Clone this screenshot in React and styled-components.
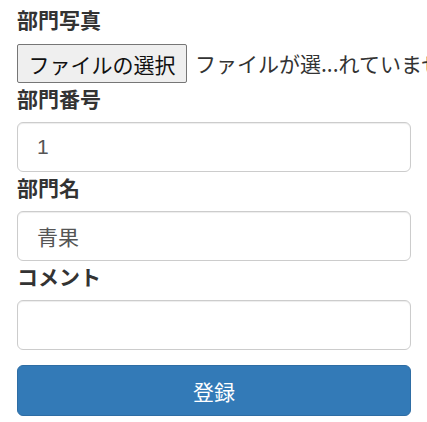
import React from 'react'
import styled, { createGlobalStyle } from 'styled-components'

const GlobalStyle = createGlobalStyle`
  html, body {
    margin: 0;
    padding: 0;
    background: #fff;
    overflow: hidden;
  }
  body {
    font-family: "Liberation Sans", "Noto Sans CJK JP", sans-serif;
    color: #333;
  }
`

const Form = styled.form`
  padding: 4px 16px 0 17px;
  display: flex;
  flex-direction: column;
`

const Label = styled.label`
  display: block;
  font-family: "Noto Sans CJK JP", sans-serif;
  font-weight: 700;
  font-size: 21px;
  line-height: 30px;
  height: 30px;
  margin-bottom: 9px;
  color: #333;
`

const FileRow = styled.div`
  display: flex;
  align-items: flex-start;
  height: 40px;
  white-space: nowrap;
  width: 410px;
  overflow: hidden;
`

const FileButton = styled.button`
  box-sizing: border-box;
  margin-top: 1px;
  height: 39px;
  width: 170px;
  padding: 0;
  background: #efefef;
  border: 1px solid #767676;
  border-radius: 2px;
  font-family: "Noto Sans CJK JP", sans-serif;
  font-size: 21px;
  color: #111;
  flex-shrink: 0;
`

const FileName = styled.span`
  margin-left: 8px;
  margin-top: 1px;
  line-height: 39px;
  font-family: "Noto Sans CJK JP", sans-serif;
  font-size: 21px;
  color: #333;
`

const Input = styled.input`
  box-sizing: border-box;
  display: block;
  width: 100%;
  height: 50px;
  margin: 0;
  padding: 0 19px;
  border: 1px solid #ccc;
  border-radius: 6px;
  box-shadow: inset 0 1px 1px rgba(0, 0, 0, 0.075);
  font-family: "Liberation Sans", "Noto Sans CJK JP", sans-serif;
  font-size: 21px;
  color: #555;
  background: #fff;
  outline: none;
`

const Submit = styled.button`
  box-sizing: border-box;
  margin-top: 15px;
  width: 100%;
  height: 51px;
  background: #337ab7;
  border: 1px solid #2e6da4;
  border-radius: 6px;
  color: #fff;
  font-family: "Noto Sans CJK JP", sans-serif;
  font-size: 21px;
`

const App = () => {
  return (
    <>
      <GlobalStyle />
      <Form onSubmit={(e) => e.preventDefault()}>
        <Label>部門写真</Label>
        <FileRow>
          <FileButton type="button">ファイルの選択</FileButton>
          <FileName>ファイルが選...れていません</FileName>
        </FileRow>
        <Label>部門番号</Label>
        <Input defaultValue="1" />
        <Label>部門名</Label>
        <Input defaultValue="青果" />
        <Label>コメント</Label>
        <Input defaultValue="" />
        <Submit type="submit">登録</Submit>
      </Form>
    </>
  )
}

export default App
